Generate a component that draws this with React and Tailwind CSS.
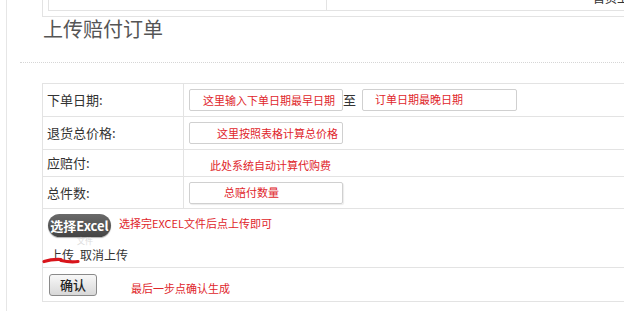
export default function App() {
  const red = "text-[#e0262b]";
  return (
    <div className="relative w-[624px] h-[311px] overflow-hidden bg-white font-['Noto_Sans_CJK_SC','Liberation_Sans',sans-serif] text-[#333]">
      <div className="ml-[6px] h-full border-l border-[#e6e6e6] pl-[35px]">
        {/* top box (previous section, cut off) */}
        <div className="h-[17px] w-[640px] border-l border-b border-[#e3e3e3] pl-[5px]">
          <div className="flex h-[11px] border-l border-b border-[#e3e3e3]">
            <div className="w-[278px] border-r border-[#e3e3e3]" />
            <div className="relative flex-1 overflow-hidden">
              <span className="absolute left-[266px] top-[-8px] whitespace-nowrap text-[12px] leading-[12px] text-[#333]">首页上</span>
            </div>
          </div>
        </div>

        {/* title */}
        <div className="ml-[1px] text-[20px] leading-[24px] text-[#555]">上传赔付订单</div>

        {/* dotted divider */}
        <div className="-ml-[22px] mt-[21px] w-[640px] border-t border-dotted border-[#d6d6d6]" />

        {/* form table */}
        <div className="mt-[20px] w-[620px] border-t border-l border-[#e3e3e3] text-[13px]">
          {/* row 1 */}
          <div className="flex h-[33px] border-b border-[#e3e3e3]">
            <div className="flex w-[141px] items-center border-r border-[#e3e3e3] pl-[4px]">下单日期:</div>
            <div className="flex flex-1 items-center pl-[5px]">
              <div className={`flex h-[22px] w-[154px] items-center rounded-[2px] border border-[#d0d0d0] pl-[13px] text-[11px] ${red}`}>这里输入下单日期最早日期</div>
              <span className="mr-[6px] text-[13px]">至</span>
              <div className={`flex h-[22px] w-[155px] items-start rounded-[2px] border border-[#d0d0d0] pl-[12px] pt-[1px] text-[11px] leading-[16px] ${red}`}>订单日期最晚日期</div>
            </div>
          </div>
          {/* row 2 */}
          <div className="flex h-[33px] border-b border-[#e3e3e3]">
            <div className="flex w-[141px] items-center border-r border-[#e3e3e3] pl-[4px]">退货总价格:</div>
            <div className="flex flex-1 items-center pl-[5px]">
              <div className={`flex h-[22px] w-[154px] items-center rounded-[2px] border border-[#d0d0d0] pl-[27px] text-[11px] ${red}`}>这里按照表格计算总价格</div>
            </div>
          </div>
          {/* row 3 */}
          <div className="flex h-[27px] border-b border-[#e3e3e3]">
            <div className="flex w-[141px] items-center border-r border-[#e3e3e3] pl-[4px]">应赔付:</div>
            <div className={`flex flex-1 items-center pl-[26px] pt-[4px] text-[11px] ${red}`}>此处系统自动计算代购费</div>
          </div>
          {/* row 4 */}
          <div className="flex h-[32px] border-b border-[#e3e3e3]">
            <div className="flex w-[141px] items-center border-r border-[#e3e3e3] pl-[4px]">总件数:</div>
            <div className="flex flex-1 items-center pl-[5px]">
              <div className={`flex h-[22px] w-[154px] items-center rounded-[2px] border border-[#d0d0d0] pl-[34px] text-[11px] shadow-[1px_1px_1px_rgba(0,0,0,0.08)] ${red}`}>总赔付数量</div>
            </div>
          </div>
          {/* row 5 */}
          <div className="flex h-[59px] flex-col border-b border-[#e3e3e3] pl-[5px]">
            <div className="mt-[5px] flex h-[23px] items-center">
              <div className="flex h-[23px] w-[63px] items-center justify-center rounded-full bg-gradient-to-b from-[#6a6a6a] to-[#444] text-[13px] font-bold text-white shadow-[0_1px_1px_rgba(0,0,0,0.3)]">选择Excel</div>
              <span className={`ml-[8px] -mt-[4px] text-[11px] ${red}`}>选择完EXCEL文件后点上传即可</span>
            </div>
            <div className="mt-[10px] flex pl-[2px] text-[12px] leading-[16px] text-[#333]">
              <span>上传</span>
              <span className="ml-[6px]">取消上传</span>
            </div>
          </div>
          {/* row 6 */}
          <div className="flex h-[34px] items-center border-b border-[#e3e3e3] pl-[6px]">
            <div className="flex h-[22px] w-[48px] items-center justify-center rounded-[3px] border border-[#8a8a8a] bg-gradient-to-b from-[#f8f8f8] to-[#d8d8d8] text-[13px] font-medium text-[#222]">确认</div>
            <span className={`ml-[34px] pt-[8px] text-[11px] ${red}`}>最后一步点确认生成</span>
          </div>
        </div>
      </div>

      {/* faint ghost text */}
      <span className="absolute left-[77px] top-[236px] text-[8px] leading-[10px] text-[#dcdcdc]">文件</span>

      {/* red hand-drawn underline */}
      <svg className="absolute left-0 top-0" width="624" height="311" viewBox="0 0 624 311">
        <path d="M44 261.5 Q52 259 61 259.5" stroke="#d8141b" strokeWidth="3.2" fill="none" strokeLinecap="round" />
        <path d="M61 260.5 Q70 262.5 78 261.5" stroke="#d8141b" strokeWidth="3.2" fill="none" strokeLinecap="round" />
      </svg>
    </div>
  );
}
